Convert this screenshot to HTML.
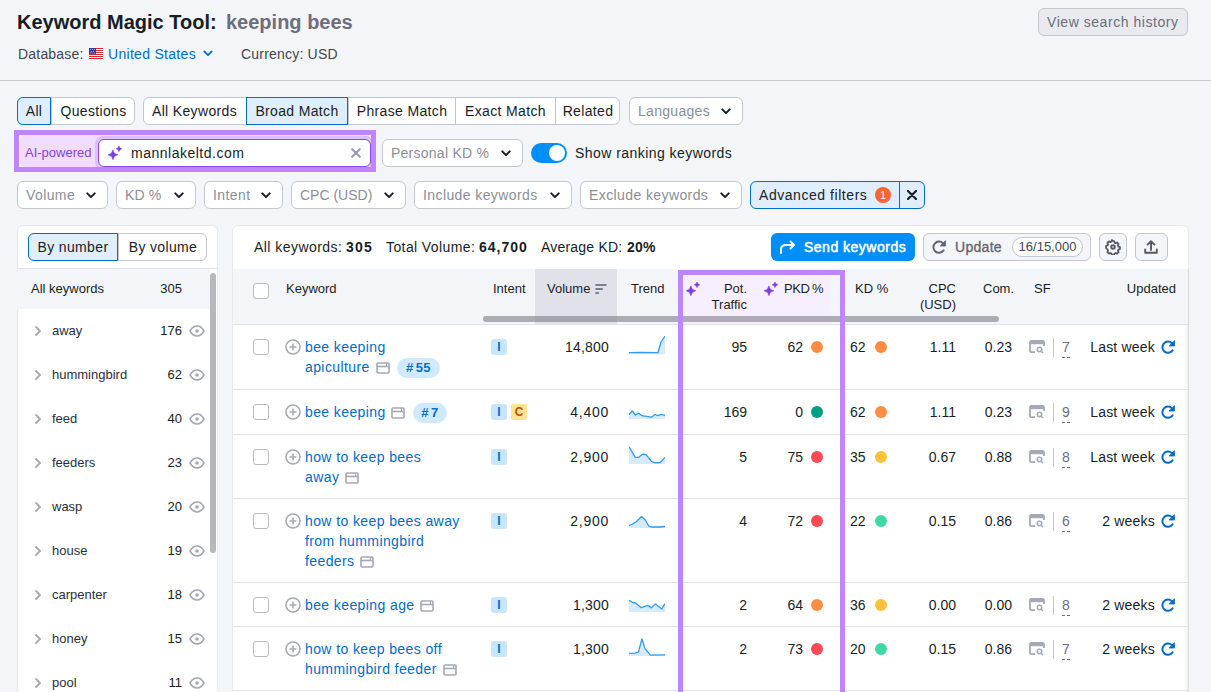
<!DOCTYPE html><html><head><meta charset="utf-8"><style>
*{box-sizing:border-box;margin:0;padding:0}
html,body{width:1211px;height:692px;overflow:hidden;background:#f4f5f9;font-family:"Liberation Sans",sans-serif;color:#181e25;font-size:14px}
.a{position:absolute;white-space:nowrap}
.tx{position:absolute;white-space:nowrap;line-height:16px}
.box{position:absolute;height:28px;border:1px solid #c4c7cf;background:#fff;border-radius:6px}
.g{color:#8b8e99}
.seg{position:absolute;top:0;height:26px;line-height:26px;text-align:center;white-space:nowrap;letter-spacing:0.35px}
.segd{border-left:1px solid #c4c7cf}
.card{position:absolute;background:#fff;border-radius:6px;border:1px solid #e8e9ef}
.cb{position:absolute;width:16px;height:16px;border:1px solid #b9bcc6;border-radius:3px;background:#fff}
.kw{position:absolute;left:305px;line-height:20px;color:#006dca;white-space:nowrap}
.num{position:absolute;line-height:20px;white-space:nowrap;text-align:right}
.dot{position:absolute;width:12px;height:12px;border-radius:50%}
.ib{position:absolute;width:16px;height:16px;border-radius:3px;font-size:12px;font-weight:bold;text-align:center;line-height:16px}
.hd{position:absolute;line-height:16px;font-size:13px;white-space:nowrap}
</style></head><body>
<div class="a" style="left:17px;top:10px;font-size:20px;font-weight:bold;line-height:24px">Keyword Magic Tool:</div>
<div class="a" style="left:226px;top:10px;font-size:20px;font-weight:bold;line-height:24px;color:#6c6e79">keeping bees</div>
<div class="tx" style="left:18px;top:46px;color:#42464e;letter-spacing:0.2px">Database:</div>
<svg class="a" style="left:89px;top:48px" width="14" height="11" viewBox="0 0 14 11"><rect width="14" height="11" fill="#fff"/><g fill="#d52b33"><rect y="0" width="14" height="1"/><rect y="2" width="14" height="1"/><rect y="4" width="14" height="1"/><rect y="6" width="14" height="1"/><rect y="8" width="14" height="1"/><rect y="10" width="14" height="1"/></g><rect width="7" height="6" fill="#3a3d8f"/><g fill="#9aa0d8"><rect x="1" y="1" width="1" height="1"/><rect x="3" y="1" width="1" height="1"/><rect x="5" y="1" width="1" height="1"/><rect x="2" y="3" width="1" height="1"/><rect x="4" y="3" width="1" height="1"/><rect x="1" y="4.5" width="1" height="1"/><rect x="3" y="4.5" width="1" height="1"/><rect x="5" y="4.5" width="1" height="1"/></g></svg>
<div class="tx" style="left:108px;top:46px;color:#006dca;letter-spacing:0.3px">United States</div>
<svg class="a" style="left:203px;top:50px" width="10" height="8" viewBox="0 0 10 8"><path d="M1.3 1.4L5 5.1L8.7 1.4" fill="none" stroke="#006dca" stroke-width="1.8" stroke-linecap="round" stroke-linejoin="round"/></svg>
<div class="tx" style="left:241px;top:46px;color:#42464e;letter-spacing:0.2px">Currency: USD</div>
<div class="box" style="left:1038px;top:8px;width:150px;background:#e9eaef;border-color:#c4c7cf"></div>
<div class="tx" style="left:1047px;top:14px;color:#6c6e79;letter-spacing:0.55px">View search history</div>
<div class="a" style="left:0;top:80px;width:1211px;height:1px;background:#c8cad3"></div>
<div class="box" style="left:17px;top:97px;width:118px;height:28px;overflow:hidden">
<div class="seg" style="left:-1px;width:34px;height:26px;line-height:26px">All</div>
<div class="seg segd" style="left:33px;width:84px;height:26px;line-height:26px">Questions</div>
</div>
<div class="a" style="left:17px;top:97px;width:34px;height:28px;border:1px solid #006dca;background:#e0eefb;border-radius:6px 0 0 6px;text-align:center;line-height:26px;letter-spacing:0.35px">All</div>
<div class="box" style="left:143px;top:97px;width:477px;height:28px;overflow:hidden">
<div class="seg" style="left:-1px;width:103px;height:26px;line-height:26px">All Keywords</div>
<div class="seg segd" style="left:102px;width:102px;height:26px;line-height:26px">Broad Match</div>
<div class="seg segd" style="left:204px;width:107px;height:26px;line-height:26px">Phrase Match</div>
<div class="seg segd" style="left:311px;width:100px;height:26px;line-height:26px">Exact Match</div>
<div class="seg segd" style="left:411px;width:65px;height:26px;line-height:26px">Related</div>
</div>
<div class="a" style="left:246px;top:97px;width:102px;height:28px;border:1px solid #006dca;background:#e0eefb;border-radius:0;text-align:center;line-height:26px;letter-spacing:0.35px">Broad Match</div>
<div class="box" style="left:629px;top:97px;width:114px"></div>
<div class="tx g" style="left:638px;top:103px;letter-spacing:0.3px">Languages</div>
<svg class="a" style="left:721px;top:108px" width="10" height="8" viewBox="0 0 10 8"><path d="M1.3 1.4L5 5.1L8.7 1.4" fill="none" stroke="#181e25" stroke-width="2" stroke-linecap="round" stroke-linejoin="round"/></svg>
<div class="a" style="left:20px;top:135px;width:351px;height:32px;background:#f0dcfd;border-radius:6px"></div>
<div class="tx" style="left:25px;top:145px;font-size:13px;color:#8b3fe0">AI-powered</div>
<div class="a" style="left:95px;top:136px;width:279px;height:34px;border-radius:8px;background:#dcc0fb"></div>
<div class="a" style="left:98px;top:139px;width:273px;height:28px;border-radius:6px;background:#fff;border:1px solid #8f45e8"></div>
<svg class="a" style="left:108px;top:146px" width="14" height="14" viewBox="0 0 14 14"><path d="M4.9 3.8000000000000007L6.4 7.300000000000001L9.9 8.8L6.4 10.3L4.9 13.8L3.4000000000000004 10.3L-0.09999999999999964 8.8L3.4000000000000004 7.300000000000001Z" fill="#7e3fe0" stroke="#7e3fe0" stroke-width="0.5" stroke-linejoin="round"/><path d="M11 -0.10000000000000009L11.928 1.8719999999999999L13.9 2.8L11.928 3.7279999999999998L11 5.699999999999999L10.072 3.7279999999999998L8.1 2.8L10.072 1.8719999999999999Z" fill="#7e3fe0" stroke="#7e3fe0" stroke-width="0.5" stroke-linejoin="round"/></svg>
<div class="tx" style="left:131px;top:145px;letter-spacing:0.5px">mannlakeltd.com</div>
<svg class="a" style="left:351px;top:148px" width="10" height="10" viewBox="0 0 10 10"><path d="M1.2 1.2l7.6 7.6M8.8 1.2l-7.6 7.6" stroke="#9b9ea8" stroke-width="2.1" stroke-linecap="round"/></svg>
<div class="a" style="left:14px;top:130px;width:362px;height:42px;border:5px solid #c084fc"></div>
<div class="box" style="left:382px;top:139px;width:141px"></div>
<div class="tx g" style="left:391px;top:145px;letter-spacing:0.25px">Personal KD %</div>
<svg class="a" style="left:501px;top:150px" width="10" height="8" viewBox="0 0 10 8"><path d="M1.3 1.4L5 5.1L8.7 1.4" fill="none" stroke="#181e25" stroke-width="2" stroke-linecap="round" stroke-linejoin="round"/></svg>
<div class="a" style="left:531px;top:143px;width:36px;height:20px;border-radius:10px;background:#008ff8"></div>
<div class="a" style="left:549px;top:145px;width:16px;height:16px;border-radius:50%;background:#fff"></div>
<div class="tx" style="left:575px;top:145px;letter-spacing:0.45px">Show ranking keywords</div>
<div class="box" style="left:17px;top:181px;width:91px"></div>
<div class="tx g" style="left:26px;top:187px;letter-spacing:0.4px">Volume</div>
<svg class="a" style="left:86px;top:192px" width="10" height="8" viewBox="0 0 10 8"><path d="M1.3 1.4L5 5.1L8.7 1.4" fill="none" stroke="#181e25" stroke-width="2" stroke-linecap="round" stroke-linejoin="round"/></svg>
<div class="box" style="left:116px;top:181px;width:80px"></div>
<div class="tx g" style="left:125px;top:187px;letter-spacing:0.1px">KD %</div>
<svg class="a" style="left:174px;top:192px" width="10" height="8" viewBox="0 0 10 8"><path d="M1.3 1.4L5 5.1L8.7 1.4" fill="none" stroke="#181e25" stroke-width="2" stroke-linecap="round" stroke-linejoin="round"/></svg>
<div class="box" style="left:204px;top:181px;width:79px"></div>
<div class="tx g" style="left:213px;top:187px;letter-spacing:0.4px">Intent</div>
<svg class="a" style="left:261px;top:192px" width="10" height="8" viewBox="0 0 10 8"><path d="M1.3 1.4L5 5.1L8.7 1.4" fill="none" stroke="#181e25" stroke-width="2" stroke-linecap="round" stroke-linejoin="round"/></svg>
<div class="box" style="left:291px;top:181px;width:115px"></div>
<div class="tx g" style="left:300px;top:187px;letter-spacing:0px">CPC (USD)</div>
<svg class="a" style="left:384px;top:192px" width="10" height="8" viewBox="0 0 10 8"><path d="M1.3 1.4L5 5.1L8.7 1.4" fill="none" stroke="#181e25" stroke-width="2" stroke-linecap="round" stroke-linejoin="round"/></svg>
<div class="box" style="left:414px;top:181px;width:158px"></div>
<div class="tx g" style="left:423px;top:187px;letter-spacing:0.4px">Include keywords</div>
<svg class="a" style="left:550px;top:192px" width="10" height="8" viewBox="0 0 10 8"><path d="M1.3 1.4L5 5.1L8.7 1.4" fill="none" stroke="#181e25" stroke-width="2" stroke-linecap="round" stroke-linejoin="round"/></svg>
<div class="box" style="left:580px;top:181px;width:162px"></div>
<div class="tx g" style="left:589px;top:187px;letter-spacing:0.4px">Exclude keywords</div>
<svg class="a" style="left:720px;top:192px" width="10" height="8" viewBox="0 0 10 8"><path d="M1.3 1.4L5 5.1L8.7 1.4" fill="none" stroke="#181e25" stroke-width="2" stroke-linecap="round" stroke-linejoin="round"/></svg>
<div class="a" style="left:750px;top:181px;width:175px;height:28px;border:1px solid #006dca;background:#e0eefb;border-radius:6px"></div>
<div class="a" style="left:899px;top:181px;width:1px;height:28px;background:#006dca"></div>
<div class="tx" style="left:759px;top:187px;letter-spacing:0.55px">Advanced filters</div>
<div class="a" style="left:875px;top:187px;width:16px;height:16px;border-radius:50%;background:#ff642d;color:#fff;font-size:11px;line-height:16px;text-align:center">1</div>
<svg class="a" style="left:907px;top:190px" width="10" height="10" viewBox="0 0 10 10"><path d="M1 1l8 8M9 1l-8 8" stroke="#181e25" stroke-width="2.2" stroke-linecap="round"/></svg>
<div class="card" style="left:17px;top:225px;width:201px;height:480px;overflow:hidden">
</div>
<div class="box" style="left:28px;top:233px;width:179px;height:28px;overflow:hidden">
<div class="seg" style="left:-1px;width:90px;height:26px;line-height:26px">By number</div>
<div class="seg segd" style="left:89px;width:89px;height:26px;line-height:26px">By volume</div>
</div>
<div class="a" style="left:28px;top:233px;width:90px;height:28px;border:1px solid #006dca;background:#e0eefb;border-radius:6px 0 0 6px;text-align:center;line-height:26px;letter-spacing:0.35px">By number</div>
<div class="a" style="left:17px;top:268px;width:200px;height:1px;background:#e0e1e9"></div>
<div class="a" style="left:17px;top:269px;width:193px;height:40px;background:#f4f5f9"></div>
<div class="tx" style="left:31px;top:281px;font-size:13px">All keywords</div>
<div class="tx" style="left:140px;width:42px;text-align:right;top:281px;font-size:13px">305</div>
<svg class="a" style="left:34px;top:326px" width="8" height="10" viewBox="0 0 8 10"><path d="M2 1l4 4-4 4" fill="none" stroke="#a6a9b3" stroke-width="1.8" stroke-linecap="round" stroke-linejoin="round"/></svg>
<div class="tx" style="left:52px;top:323px;font-size:13px;color:#2b2f36">away</div>
<div class="tx" style="left:140px;width:42px;text-align:right;top:323px;font-size:13px">176</div>
<svg class="a" style="left:189px;top:325px" width="16" height="12" viewBox="0 0 16 12"><path d="M1 6C3 2.4 5.4 1 8 1s5 1.4 7 5c-2 3.6-4.4 5-7 5S3 9.6 1 6Z" fill="none" stroke="#a6a9b3" stroke-width="1.6"/><circle cx="8" cy="6" r="1.8" fill="#a6a9b3"/></svg>
<svg class="a" style="left:34px;top:370px" width="8" height="10" viewBox="0 0 8 10"><path d="M2 1l4 4-4 4" fill="none" stroke="#a6a9b3" stroke-width="1.8" stroke-linecap="round" stroke-linejoin="round"/></svg>
<div class="tx" style="left:52px;top:367px;font-size:13px;color:#2b2f36">hummingbird</div>
<div class="tx" style="left:140px;width:42px;text-align:right;top:367px;font-size:13px">62</div>
<svg class="a" style="left:189px;top:369px" width="16" height="12" viewBox="0 0 16 12"><path d="M1 6C3 2.4 5.4 1 8 1s5 1.4 7 5c-2 3.6-4.4 5-7 5S3 9.6 1 6Z" fill="none" stroke="#a6a9b3" stroke-width="1.6"/><circle cx="8" cy="6" r="1.8" fill="#a6a9b3"/></svg>
<svg class="a" style="left:34px;top:414px" width="8" height="10" viewBox="0 0 8 10"><path d="M2 1l4 4-4 4" fill="none" stroke="#a6a9b3" stroke-width="1.8" stroke-linecap="round" stroke-linejoin="round"/></svg>
<div class="tx" style="left:52px;top:411px;font-size:13px;color:#2b2f36">feed</div>
<div class="tx" style="left:140px;width:42px;text-align:right;top:411px;font-size:13px">40</div>
<svg class="a" style="left:189px;top:413px" width="16" height="12" viewBox="0 0 16 12"><path d="M1 6C3 2.4 5.4 1 8 1s5 1.4 7 5c-2 3.6-4.4 5-7 5S3 9.6 1 6Z" fill="none" stroke="#a6a9b3" stroke-width="1.6"/><circle cx="8" cy="6" r="1.8" fill="#a6a9b3"/></svg>
<svg class="a" style="left:34px;top:458px" width="8" height="10" viewBox="0 0 8 10"><path d="M2 1l4 4-4 4" fill="none" stroke="#a6a9b3" stroke-width="1.8" stroke-linecap="round" stroke-linejoin="round"/></svg>
<div class="tx" style="left:52px;top:455px;font-size:13px;color:#2b2f36">feeders</div>
<div class="tx" style="left:140px;width:42px;text-align:right;top:455px;font-size:13px">23</div>
<svg class="a" style="left:189px;top:457px" width="16" height="12" viewBox="0 0 16 12"><path d="M1 6C3 2.4 5.4 1 8 1s5 1.4 7 5c-2 3.6-4.4 5-7 5S3 9.6 1 6Z" fill="none" stroke="#a6a9b3" stroke-width="1.6"/><circle cx="8" cy="6" r="1.8" fill="#a6a9b3"/></svg>
<svg class="a" style="left:34px;top:502px" width="8" height="10" viewBox="0 0 8 10"><path d="M2 1l4 4-4 4" fill="none" stroke="#a6a9b3" stroke-width="1.8" stroke-linecap="round" stroke-linejoin="round"/></svg>
<div class="tx" style="left:52px;top:499px;font-size:13px;color:#2b2f36">wasp</div>
<div class="tx" style="left:140px;width:42px;text-align:right;top:499px;font-size:13px">20</div>
<svg class="a" style="left:189px;top:501px" width="16" height="12" viewBox="0 0 16 12"><path d="M1 6C3 2.4 5.4 1 8 1s5 1.4 7 5c-2 3.6-4.4 5-7 5S3 9.6 1 6Z" fill="none" stroke="#a6a9b3" stroke-width="1.6"/><circle cx="8" cy="6" r="1.8" fill="#a6a9b3"/></svg>
<svg class="a" style="left:34px;top:546px" width="8" height="10" viewBox="0 0 8 10"><path d="M2 1l4 4-4 4" fill="none" stroke="#a6a9b3" stroke-width="1.8" stroke-linecap="round" stroke-linejoin="round"/></svg>
<div class="tx" style="left:52px;top:543px;font-size:13px;color:#2b2f36">house</div>
<div class="tx" style="left:140px;width:42px;text-align:right;top:543px;font-size:13px">19</div>
<svg class="a" style="left:189px;top:545px" width="16" height="12" viewBox="0 0 16 12"><path d="M1 6C3 2.4 5.4 1 8 1s5 1.4 7 5c-2 3.6-4.4 5-7 5S3 9.6 1 6Z" fill="none" stroke="#a6a9b3" stroke-width="1.6"/><circle cx="8" cy="6" r="1.8" fill="#a6a9b3"/></svg>
<svg class="a" style="left:34px;top:590px" width="8" height="10" viewBox="0 0 8 10"><path d="M2 1l4 4-4 4" fill="none" stroke="#a6a9b3" stroke-width="1.8" stroke-linecap="round" stroke-linejoin="round"/></svg>
<div class="tx" style="left:52px;top:587px;font-size:13px;color:#2b2f36">carpenter</div>
<div class="tx" style="left:140px;width:42px;text-align:right;top:587px;font-size:13px">18</div>
<svg class="a" style="left:189px;top:589px" width="16" height="12" viewBox="0 0 16 12"><path d="M1 6C3 2.4 5.4 1 8 1s5 1.4 7 5c-2 3.6-4.4 5-7 5S3 9.6 1 6Z" fill="none" stroke="#a6a9b3" stroke-width="1.6"/><circle cx="8" cy="6" r="1.8" fill="#a6a9b3"/></svg>
<svg class="a" style="left:34px;top:634px" width="8" height="10" viewBox="0 0 8 10"><path d="M2 1l4 4-4 4" fill="none" stroke="#a6a9b3" stroke-width="1.8" stroke-linecap="round" stroke-linejoin="round"/></svg>
<div class="tx" style="left:52px;top:631px;font-size:13px;color:#2b2f36">honey</div>
<div class="tx" style="left:140px;width:42px;text-align:right;top:631px;font-size:13px">15</div>
<svg class="a" style="left:189px;top:633px" width="16" height="12" viewBox="0 0 16 12"><path d="M1 6C3 2.4 5.4 1 8 1s5 1.4 7 5c-2 3.6-4.4 5-7 5S3 9.6 1 6Z" fill="none" stroke="#a6a9b3" stroke-width="1.6"/><circle cx="8" cy="6" r="1.8" fill="#a6a9b3"/></svg>
<svg class="a" style="left:34px;top:678px" width="8" height="10" viewBox="0 0 8 10"><path d="M2 1l4 4-4 4" fill="none" stroke="#a6a9b3" stroke-width="1.8" stroke-linecap="round" stroke-linejoin="round"/></svg>
<div class="tx" style="left:52px;top:675px;font-size:13px;color:#2b2f36">pool</div>
<div class="tx" style="left:140px;width:42px;text-align:right;top:675px;font-size:13px">11</div>
<svg class="a" style="left:189px;top:677px" width="16" height="12" viewBox="0 0 16 12"><path d="M1 6C3 2.4 5.4 1 8 1s5 1.4 7 5c-2 3.6-4.4 5-7 5S3 9.6 1 6Z" fill="none" stroke="#a6a9b3" stroke-width="1.6"/><circle cx="8" cy="6" r="1.8" fill="#a6a9b3"/></svg>
<div class="a" style="left:210px;top:273px;width:6px;height:280px;border-radius:3px;background:#b6b8be"></div>
<div class="card" style="left:232px;top:225px;width:957px;height:480px"></div>
<div class="a" style="left:1184px;top:269px;width:5px;height:430px;background:linear-gradient(90deg,rgba(0,0,0,0),rgba(0,0,0,0.07))"></div>
<div class="tx" style="left:254px;top:239px;letter-spacing:0.45px">All keywords:</div>
<div class="tx" style="left:346px;top:239px;font-weight:bold;letter-spacing:1.2px">305</div>
<div class="tx" style="left:386px;top:239px;letter-spacing:0.4px">Total Volume:</div>
<div class="tx" style="left:479px;top:239px;font-weight:bold;letter-spacing:1px">64,700</div>
<div class="tx" style="left:541px;top:239px;letter-spacing:0.2px">Average KD:</div>
<div class="tx" style="left:627px;top:239px;font-weight:bold;letter-spacing:0.2px">20%</div>
<div class="a" style="left:771px;top:233px;width:144px;height:28px;border-radius:6px;background:#008ff8"></div>
<svg class="a" style="left:779px;top:240px" width="17" height="14" viewBox="0 0 17 14"><path d="M2 13V9.5C2 6.5 4 5 7 5h8M11.5 1.5L15 5l-3.5 3.5" fill="none" stroke="#fff" stroke-width="2" stroke-linecap="round" stroke-linejoin="round"/></svg>
<div class="tx" style="left:804px;top:239px;color:#fff;letter-spacing:0.5px;-webkit-text-stroke:0.5px #fff">Send keywords</div>
<div class="box" style="left:923px;top:233px;width:168px;background:#f4f5f9"></div>
<svg class="a" style="left:932px;top:240px" width="14" height="14" viewBox="0 0 14 14"><path d="M10.9 3.2A5.6 5.6 0 1 0 11.6 10.4" fill="none" stroke="#5f636e" stroke-width="2" stroke-linecap="round"/><path d="M13.6 0.6V6H8.2Z" fill="#5f636e" stroke="#5f636e" stroke-width="0.8" stroke-linejoin="round"/></svg>
<div class="tx" style="left:955px;top:239px;color:#5f636e;letter-spacing:0.3px;-webkit-text-stroke:0.3px #5f636e">Update</div>
<div class="a" style="left:1012px;top:237px;width:71px;height:20px;border:1px solid #c4c7cf;border-radius:10px;background:#fff;font-size:13px;line-height:18px;text-align:center;color:#42464e">16/15,000</div>
<div class="box" style="left:1099px;top:233px;width:28px;background:#f4f5f9"></div>
<svg class="a" style="left:1105px;top:239px" width="16" height="16" viewBox="0 0 18 18"><path d="M9 2.2l1.3.2.4 1.7 1.2.6 1.6-.8 1.8 1.8-.8 1.6.6 1.2 1.7.4v2.6l-1.7.4-.6 1.2.8 1.6-1.8 1.8-1.6-.8-1.2.6-.4 1.7H7.7l-.4-1.7-1.2-.6-1.6.8-1.8-1.8.8-1.6-.6-1.2L1.2 10.3V7.7l1.7-.4.6-1.2-.8-1.6 1.8-1.8 1.6.8 1.2-.6.4-1.7z" fill="none" stroke="#555963" stroke-width="2" stroke-linejoin="round"/><circle cx="9" cy="9" r="2.2" fill="#a8abb4" stroke="#555963" stroke-width="1.8"/></svg>
<div class="box" style="left:1135px;top:233px;width:33px;background:#f4f5f9"></div>
<svg class="a" style="left:1144px;top:240px" width="14" height="14" viewBox="0 0 14 14"><path d="M7 10V1.5M3.6 4.6L7 1.3l3.4 3.3M1.2 9.5v3.2h11.6V9.5" fill="none" stroke="#555963" stroke-width="1.9" stroke-linecap="round" stroke-linejoin="round"/></svg>
<div class="a" style="left:233px;top:269px;width:955px;height:55px;background:#f4f5f9"></div>
<div class="a" style="left:535px;top:269px;width:82px;height:55px;background:#e1e2e9"></div>
<div class="a" style="left:682px;top:269px;width:149px;height:55px;background:#f8effe"></div>
<div class="a" style="left:233px;top:324px;width:955px;height:1px;background:#e0e1e9"></div>
<div class="cb" style="left:253px;top:283px"></div>
<div class="hd" style="left:286px;top:281px">Keyword</div>
<div class="hd" style="left:493px;top:281px">Intent</div>
<div class="hd" style="left:547px;top:281px">Volume</div>
<svg class="a" style="left:595px;top:283px" width="12" height="12" viewBox="0 0 12 12"><path d="M1 2h10M1 6h6.2M1 10h2.4" stroke="#4d6669" stroke-width="1.6" stroke-linecap="round"/></svg>
<div class="hd" style="left:631px;top:281px">Trend</div>
<svg class="a" style="left:686px;top:282px" width="14" height="14" viewBox="0 0 14 14"><path d="M4.9 3.8000000000000007L6.4 7.300000000000001L9.9 8.8L6.4 10.3L4.9 13.8L3.4000000000000004 10.3L-0.09999999999999964 8.8L3.4000000000000004 7.300000000000001Z" fill="#7e3fe0" stroke="#7e3fe0" stroke-width="0.5" stroke-linejoin="round"/><path d="M11 -0.10000000000000009L11.928 1.8719999999999999L13.9 2.8L11.928 3.7279999999999998L11 5.699999999999999L10.072 3.7279999999999998L8.1 2.8L10.072 1.8719999999999999Z" fill="#7e3fe0" stroke="#7e3fe0" stroke-width="0.5" stroke-linejoin="round"/></svg>
<div class="hd" style="left:700px;width:47px;text-align:right;top:281px">Pot.<br>Traffic</div>
<svg class="a" style="left:764px;top:282px" width="14" height="14" viewBox="0 0 14 14"><path d="M4.9 3.8000000000000007L6.4 7.300000000000001L9.9 8.8L6.4 10.3L4.9 13.8L3.4000000000000004 10.3L-0.09999999999999964 8.8L3.4000000000000004 7.300000000000001Z" fill="#7e3fe0" stroke="#7e3fe0" stroke-width="0.5" stroke-linejoin="round"/><path d="M11 -0.10000000000000009L11.928 1.8719999999999999L13.9 2.8L11.928 3.7279999999999998L11 5.699999999999999L10.072 3.7279999999999998L8.1 2.8L10.072 1.8719999999999999Z" fill="#7e3fe0" stroke="#7e3fe0" stroke-width="0.5" stroke-linejoin="round"/></svg>
<div class="hd" style="left:784px;top:281px;letter-spacing:-0.4px">PKD</div><div class="hd" style="left:812px;top:281px;letter-spacing:-0.4px">%</div>
<div class="hd" style="left:855px;top:281px">KD %</div>
<div class="hd" style="left:900px;width:56px;text-align:right;top:281px">CPC<br>(USD)</div>
<div class="hd" style="left:983px;top:281px">Com.</div>
<div class="hd" style="left:1034px;top:281px">SF</div>
<div class="hd" style="left:1100px;width:76px;text-align:right;top:281px">Updated</div>
<div class="a" style="left:483px;top:316px;width:516px;height:6px;border-radius:3px;background:rgba(105,108,117,0.52)"></div>
<div class="a" style="left:233px;top:389px;width:955px;height:1px;background:#e0e1e9"></div>
<div class="cb" style="left:253px;top:339px"></div>
<svg class="a" style="left:285px;top:339px" width="16" height="16" viewBox="0 0 16 16"><circle cx="8" cy="8" r="7" fill="none" stroke="#a6a9b3" stroke-width="1.6"/><path d="M8 4.5v7M4.5 8h7" stroke="#a6a9b3" stroke-width="1.6"/></svg>
<div class="kw" style="top:337px;letter-spacing:0.4px">bee keeping<br>apiculture</div>
<svg class="a" style="left:376px;top:362px" width="14" height="12" viewBox="0 0 14 12"><rect x="1" y="1" width="12" height="10" rx="1" fill="none" stroke="#a6a9b3" stroke-width="1.6"/><path d="M1 4.5h12" stroke="#a6a9b3" stroke-width="1.6"/><path d="M10.5 1v3.5" stroke="#a6a9b3" stroke-width="1.2"/></svg>
<div class="a" style="left:397px;top:358px;width:43px;height:20px;border-radius:10px;background:#cfeafd;color:#0a6ccb;font-size:13px;font-weight:bold;line-height:20px;text-align:center;letter-spacing:0.4px"><span style="margin-right:2px">#</span>55</div>
<div class="ib" style="left:491px;top:339px;background:#c7e6fc;color:#0a6ac9">I</div>
<div class="num" style="left:548px;width:61px;top:337px;letter-spacing:0.2px">14,800</div>
<svg class="a" style="left:629px;top:336px" width="36" height="18" viewBox="0 0 36 18"><path d="M0.0 16.7 L12.0 16.4 L29.0 16.7 L32.0 6.0 L36.0 0.2 L36 18 L0 18Z" fill="#d6ebfc"/><path d="M0.0 16.7 L12.0 16.4 L29.0 16.7 L32.0 6.0 L36.0 0.2" fill="none" stroke="#2f9bf2" stroke-width="1.3" stroke-linejoin="round"/></svg>
<div class="num" style="left:700px;width:47px;top:337px">95</div>
<div class="num" style="left:760px;width:43px;top:337px">62</div>
<div class="dot" style="left:811px;top:341px;background:#ff8c43"></div>
<div class="num" style="left:850px;top:337px;text-align:left">62</div>
<div class="dot" style="left:875px;top:341px;background:#ff8c43"></div>
<div class="num" style="left:900px;width:56px;top:337px">1.11</div>
<div class="num" style="left:960px;width:52px;top:337px">0.23</div>
<svg class="a" style="left:1029px;top:340px" width="16" height="14" viewBox="0 0 16 14"><path d="M6 12.2H2.2A1.2 1.2 0 0 1 1 11V2.2A1.2 1.2 0 0 1 2.2 1h11.6A1.2 1.2 0 0 1 15 2.2V6" fill="none" stroke="#a6a9b3" stroke-width="1.8"/><path d="M1 3h14" stroke="#a6a9b3" stroke-width="2.4"/><circle cx="10.5" cy="9.5" r="2.2" fill="none" stroke="#a6a9b3" stroke-width="1.6"/><path d="M12.2 11.2L14 13" stroke="#a6a9b3" stroke-width="1.6"/></svg>
<div class="a" style="left:1053px;top:338px;width:1px;height:19px;background:#c4c7cf"></div>
<div class="num" style="left:1062px;top:337px;color:#6c6e79">7</div>
<div class="a" style="left:1062px;top:357px;width:8px;height:0;border-top:1px dashed #6c6e79"></div>
<div class="num" style="left:1070px;width:85px;top:337px;letter-spacing:0.2px">Last week</div>
<svg class="a" style="left:1161px;top:340px" width="14" height="14" viewBox="0 0 14 14"><path d="M10.9 3.2A5.6 5.6 0 1 0 11.6 10.4" fill="none" stroke="#006dca" stroke-width="2" stroke-linecap="round"/><path d="M13.6 0.6V6H8.2Z" fill="#006dca" stroke="#006dca" stroke-width="0.8" stroke-linejoin="round"/></svg>
<div class="a" style="left:233px;top:434px;width:955px;height:1px;background:#e0e1e9"></div>
<div class="cb" style="left:253px;top:404px"></div>
<svg class="a" style="left:285px;top:404px" width="16" height="16" viewBox="0 0 16 16"><circle cx="8" cy="8" r="7" fill="none" stroke="#a6a9b3" stroke-width="1.6"/><path d="M8 4.5v7M4.5 8h7" stroke="#a6a9b3" stroke-width="1.6"/></svg>
<div class="kw" style="top:402px;letter-spacing:0.4px">bee keeping</div>
<svg class="a" style="left:391px;top:407px" width="14" height="12" viewBox="0 0 14 12"><rect x="1" y="1" width="12" height="10" rx="1" fill="none" stroke="#a6a9b3" stroke-width="1.6"/><path d="M1 4.5h12" stroke="#a6a9b3" stroke-width="1.6"/><path d="M10.5 1v3.5" stroke="#a6a9b3" stroke-width="1.2"/></svg>
<div class="a" style="left:413px;top:403px;width:34px;height:20px;border-radius:10px;background:#cfeafd;color:#0a6ccb;font-size:13px;font-weight:bold;line-height:20px;text-align:center;letter-spacing:0.4px"><span style="margin-right:2px">#</span>7</div>
<div class="ib" style="left:491px;top:404px;background:#c7e6fc;color:#0a6ac9">I</div>
<div class="ib" style="left:511px;top:404px;background:#fde38f;color:#b5520f">C</div>
<div class="num" style="left:548px;width:61px;top:402px;letter-spacing:0.75px">4,400</div>
<svg class="a" style="left:629px;top:401px" width="36" height="18" viewBox="0 0 36 18"><path d="M0.0 13.5 L3.3 10.0 L6.5 14.0 L9.5 12.4 L13.0 14.6 L16.0 15.1 L22.5 16.2 L25.7 13.5 L28.9 14.6 L32.2 13.3 L36.0 14.4 L36 18 L0 18Z" fill="#d6ebfc"/><path d="M0.0 13.5 L3.3 10.0 L6.5 14.0 L9.5 12.4 L13.0 14.6 L16.0 15.1 L22.5 16.2 L25.7 13.5 L28.9 14.6 L32.2 13.3 L36.0 14.4" fill="none" stroke="#2f9bf2" stroke-width="1.3" stroke-linejoin="round"/></svg>
<div class="num" style="left:700px;width:47px;top:402px">169</div>
<div class="num" style="left:760px;width:43px;top:402px">0</div>
<div class="dot" style="left:811px;top:406px;background:#009f81"></div>
<div class="num" style="left:850px;top:402px;text-align:left">62</div>
<div class="dot" style="left:875px;top:406px;background:#ff8c43"></div>
<div class="num" style="left:900px;width:56px;top:402px">1.11</div>
<div class="num" style="left:960px;width:52px;top:402px">0.23</div>
<svg class="a" style="left:1029px;top:405px" width="16" height="14" viewBox="0 0 16 14"><path d="M6 12.2H2.2A1.2 1.2 0 0 1 1 11V2.2A1.2 1.2 0 0 1 2.2 1h11.6A1.2 1.2 0 0 1 15 2.2V6" fill="none" stroke="#a6a9b3" stroke-width="1.8"/><path d="M1 3h14" stroke="#a6a9b3" stroke-width="2.4"/><circle cx="10.5" cy="9.5" r="2.2" fill="none" stroke="#a6a9b3" stroke-width="1.6"/><path d="M12.2 11.2L14 13" stroke="#a6a9b3" stroke-width="1.6"/></svg>
<div class="a" style="left:1053px;top:403px;width:1px;height:19px;background:#c4c7cf"></div>
<div class="num" style="left:1062px;top:402px;color:#6c6e79">9</div>
<div class="a" style="left:1062px;top:422px;width:8px;height:0;border-top:1px dashed #6c6e79"></div>
<div class="num" style="left:1070px;width:85px;top:402px;letter-spacing:0.2px">Last week</div>
<svg class="a" style="left:1161px;top:405px" width="14" height="14" viewBox="0 0 14 14"><path d="M10.9 3.2A5.6 5.6 0 1 0 11.6 10.4" fill="none" stroke="#006dca" stroke-width="2" stroke-linecap="round"/><path d="M13.6 0.6V6H8.2Z" fill="#006dca" stroke="#006dca" stroke-width="0.8" stroke-linejoin="round"/></svg>
<div class="a" style="left:233px;top:498px;width:955px;height:1px;background:#e0e1e9"></div>
<div class="cb" style="left:253px;top:449px"></div>
<svg class="a" style="left:285px;top:449px" width="16" height="16" viewBox="0 0 16 16"><circle cx="8" cy="8" r="7" fill="none" stroke="#a6a9b3" stroke-width="1.6"/><path d="M8 4.5v7M4.5 8h7" stroke="#a6a9b3" stroke-width="1.6"/></svg>
<div class="kw" style="top:447px;letter-spacing:0.4px">how to keep bees<br>away</div>
<svg class="a" style="left:345px;top:472px" width="14" height="12" viewBox="0 0 14 12"><rect x="1" y="1" width="12" height="10" rx="1" fill="none" stroke="#a6a9b3" stroke-width="1.6"/><path d="M1 4.5h12" stroke="#a6a9b3" stroke-width="1.6"/><path d="M10.5 1v3.5" stroke="#a6a9b3" stroke-width="1.2"/></svg>
<div class="ib" style="left:491px;top:449px;background:#c7e6fc;color:#0a6ac9">I</div>
<div class="num" style="left:548px;width:61px;top:447px;letter-spacing:0.75px">2,900</div>
<svg class="a" style="left:629px;top:446px" width="36" height="18" viewBox="0 0 36 18"><path d="M0.0 0.8 L6.2 11.4 L9.5 11.4 L13.8 8.1 L17.0 8.7 L22.5 15.4 L26.3 16.8 L31.1 16.5 L36.0 11.4 L36 18 L0 18Z" fill="#d6ebfc"/><path d="M0.0 0.8 L6.2 11.4 L9.5 11.4 L13.8 8.1 L17.0 8.7 L22.5 15.4 L26.3 16.8 L31.1 16.5 L36.0 11.4" fill="none" stroke="#2f9bf2" stroke-width="1.3" stroke-linejoin="round"/></svg>
<div class="num" style="left:700px;width:47px;top:447px">5</div>
<div class="num" style="left:760px;width:43px;top:447px">75</div>
<div class="dot" style="left:811px;top:451px;background:#ff4953"></div>
<div class="num" style="left:850px;top:447px;text-align:left">35</div>
<div class="dot" style="left:875px;top:451px;background:#ffc23a"></div>
<div class="num" style="left:900px;width:56px;top:447px">0.67</div>
<div class="num" style="left:960px;width:52px;top:447px">0.88</div>
<svg class="a" style="left:1029px;top:450px" width="16" height="14" viewBox="0 0 16 14"><path d="M6 12.2H2.2A1.2 1.2 0 0 1 1 11V2.2A1.2 1.2 0 0 1 2.2 1h11.6A1.2 1.2 0 0 1 15 2.2V6" fill="none" stroke="#a6a9b3" stroke-width="1.8"/><path d="M1 3h14" stroke="#a6a9b3" stroke-width="2.4"/><circle cx="10.5" cy="9.5" r="2.2" fill="none" stroke="#a6a9b3" stroke-width="1.6"/><path d="M12.2 11.2L14 13" stroke="#a6a9b3" stroke-width="1.6"/></svg>
<div class="a" style="left:1053px;top:448px;width:1px;height:19px;background:#c4c7cf"></div>
<div class="num" style="left:1062px;top:447px;color:#6c6e79">8</div>
<div class="a" style="left:1062px;top:467px;width:8px;height:0;border-top:1px dashed #6c6e79"></div>
<div class="num" style="left:1070px;width:85px;top:447px;letter-spacing:0.2px">Last week</div>
<svg class="a" style="left:1161px;top:450px" width="14" height="14" viewBox="0 0 14 14"><path d="M10.9 3.2A5.6 5.6 0 1 0 11.6 10.4" fill="none" stroke="#006dca" stroke-width="2" stroke-linecap="round"/><path d="M13.6 0.6V6H8.2Z" fill="#006dca" stroke="#006dca" stroke-width="0.8" stroke-linejoin="round"/></svg>
<div class="a" style="left:233px;top:582px;width:955px;height:1px;background:#e0e1e9"></div>
<div class="cb" style="left:253px;top:513px"></div>
<svg class="a" style="left:285px;top:513px" width="16" height="16" viewBox="0 0 16 16"><circle cx="8" cy="8" r="7" fill="none" stroke="#a6a9b3" stroke-width="1.6"/><path d="M8 4.5v7M4.5 8h7" stroke="#a6a9b3" stroke-width="1.6"/></svg>
<div class="kw" style="top:511px;letter-spacing:0.4px">how to keep bees away<br>from hummingbird<br>feeders</div>
<svg class="a" style="left:360px;top:556px" width="14" height="12" viewBox="0 0 14 12"><rect x="1" y="1" width="12" height="10" rx="1" fill="none" stroke="#a6a9b3" stroke-width="1.6"/><path d="M1 4.5h12" stroke="#a6a9b3" stroke-width="1.6"/><path d="M10.5 1v3.5" stroke="#a6a9b3" stroke-width="1.2"/></svg>
<div class="ib" style="left:491px;top:513px;background:#c7e6fc;color:#0a6ac9">I</div>
<div class="num" style="left:548px;width:61px;top:511px;letter-spacing:0.75px">2,900</div>
<svg class="a" style="left:629px;top:510px" width="36" height="18" viewBox="0 0 36 18"><path d="M0.0 15.4 L2.9 14.5 L7.2 11.7 L12.6 6.5 L16.5 10.2 L19.5 15.8 L22.1 17.0 L30.0 17.0 L36.0 16.5 L36 18 L0 18Z" fill="#d6ebfc"/><path d="M0.0 15.4 L2.9 14.5 L7.2 11.7 L12.6 6.5 L16.5 10.2 L19.5 15.8 L22.1 17.0 L30.0 17.0 L36.0 16.5" fill="none" stroke="#2f9bf2" stroke-width="1.3" stroke-linejoin="round"/></svg>
<div class="num" style="left:700px;width:47px;top:511px">4</div>
<div class="num" style="left:760px;width:43px;top:511px">72</div>
<div class="dot" style="left:811px;top:515px;background:#ff4953"></div>
<div class="num" style="left:850px;top:511px;text-align:left">22</div>
<div class="dot" style="left:875px;top:515px;background:#3ed9a3"></div>
<div class="num" style="left:900px;width:56px;top:511px">0.15</div>
<div class="num" style="left:960px;width:52px;top:511px">0.86</div>
<svg class="a" style="left:1029px;top:514px" width="16" height="14" viewBox="0 0 16 14"><path d="M6 12.2H2.2A1.2 1.2 0 0 1 1 11V2.2A1.2 1.2 0 0 1 2.2 1h11.6A1.2 1.2 0 0 1 15 2.2V6" fill="none" stroke="#a6a9b3" stroke-width="1.8"/><path d="M1 3h14" stroke="#a6a9b3" stroke-width="2.4"/><circle cx="10.5" cy="9.5" r="2.2" fill="none" stroke="#a6a9b3" stroke-width="1.6"/><path d="M12.2 11.2L14 13" stroke="#a6a9b3" stroke-width="1.6"/></svg>
<div class="a" style="left:1053px;top:512px;width:1px;height:19px;background:#c4c7cf"></div>
<div class="num" style="left:1062px;top:511px;color:#6c6e79">6</div>
<div class="a" style="left:1062px;top:531px;width:8px;height:0;border-top:1px dashed #6c6e79"></div>
<div class="num" style="left:1070px;width:85px;top:511px;letter-spacing:0.2px">2 weeks</div>
<svg class="a" style="left:1161px;top:514px" width="14" height="14" viewBox="0 0 14 14"><path d="M10.9 3.2A5.6 5.6 0 1 0 11.6 10.4" fill="none" stroke="#006dca" stroke-width="2" stroke-linecap="round"/><path d="M13.6 0.6V6H8.2Z" fill="#006dca" stroke="#006dca" stroke-width="0.8" stroke-linejoin="round"/></svg>
<div class="a" style="left:233px;top:626px;width:955px;height:1px;background:#e0e1e9"></div>
<div class="cb" style="left:253px;top:597px"></div>
<svg class="a" style="left:285px;top:597px" width="16" height="16" viewBox="0 0 16 16"><circle cx="8" cy="8" r="7" fill="none" stroke="#a6a9b3" stroke-width="1.6"/><path d="M8 4.5v7M4.5 8h7" stroke="#a6a9b3" stroke-width="1.6"/></svg>
<div class="kw" style="top:595px;letter-spacing:0.4px">bee keeping age</div>
<svg class="a" style="left:420px;top:600px" width="14" height="12" viewBox="0 0 14 12"><rect x="1" y="1" width="12" height="10" rx="1" fill="none" stroke="#a6a9b3" stroke-width="1.6"/><path d="M1 4.5h12" stroke="#a6a9b3" stroke-width="1.6"/><path d="M10.5 1v3.5" stroke="#a6a9b3" stroke-width="1.2"/></svg>
<div class="ib" style="left:491px;top:597px;background:#c7e6fc;color:#0a6ac9">I</div>
<div class="num" style="left:548px;width:61px;top:595px;letter-spacing:0.2px">1,300</div>
<svg class="a" style="left:629px;top:594px" width="36" height="18" viewBox="0 0 36 18"><path d="M0.0 6.3 L3.5 8.5 L6.2 8.8 L12.2 13.7 L18.7 11.4 L22.5 13.9 L26.3 9.9 L32.8 15.0 L36.0 9.6 L36 18 L0 18Z" fill="#d6ebfc"/><path d="M0.0 6.3 L3.5 8.5 L6.2 8.8 L12.2 13.7 L18.7 11.4 L22.5 13.9 L26.3 9.9 L32.8 15.0 L36.0 9.6" fill="none" stroke="#2f9bf2" stroke-width="1.3" stroke-linejoin="round"/></svg>
<div class="num" style="left:700px;width:47px;top:595px">2</div>
<div class="num" style="left:760px;width:43px;top:595px">64</div>
<div class="dot" style="left:811px;top:599px;background:#ff8c43"></div>
<div class="num" style="left:850px;top:595px;text-align:left">36</div>
<div class="dot" style="left:875px;top:599px;background:#ffc23a"></div>
<div class="num" style="left:900px;width:56px;top:595px">0.00</div>
<div class="num" style="left:960px;width:52px;top:595px">0.00</div>
<svg class="a" style="left:1029px;top:598px" width="16" height="14" viewBox="0 0 16 14"><path d="M6 12.2H2.2A1.2 1.2 0 0 1 1 11V2.2A1.2 1.2 0 0 1 2.2 1h11.6A1.2 1.2 0 0 1 15 2.2V6" fill="none" stroke="#a6a9b3" stroke-width="1.8"/><path d="M1 3h14" stroke="#a6a9b3" stroke-width="2.4"/><circle cx="10.5" cy="9.5" r="2.2" fill="none" stroke="#a6a9b3" stroke-width="1.6"/><path d="M12.2 11.2L14 13" stroke="#a6a9b3" stroke-width="1.6"/></svg>
<div class="a" style="left:1053px;top:596px;width:1px;height:19px;background:#c4c7cf"></div>
<div class="num" style="left:1062px;top:595px;color:#6c6e79">8</div>
<div class="a" style="left:1062px;top:615px;width:8px;height:0;border-top:1px dashed #6c6e79"></div>
<div class="num" style="left:1070px;width:85px;top:595px;letter-spacing:0.2px">2 weeks</div>
<svg class="a" style="left:1161px;top:598px" width="14" height="14" viewBox="0 0 14 14"><path d="M10.9 3.2A5.6 5.6 0 1 0 11.6 10.4" fill="none" stroke="#006dca" stroke-width="2" stroke-linecap="round"/><path d="M13.6 0.6V6H8.2Z" fill="#006dca" stroke="#006dca" stroke-width="0.8" stroke-linejoin="round"/></svg>
<div class="a" style="left:233px;top:690px;width:955px;height:1px;background:#e0e1e9"></div>
<div class="cb" style="left:253px;top:641px"></div>
<svg class="a" style="left:285px;top:641px" width="16" height="16" viewBox="0 0 16 16"><circle cx="8" cy="8" r="7" fill="none" stroke="#a6a9b3" stroke-width="1.6"/><path d="M8 4.5v7M4.5 8h7" stroke="#a6a9b3" stroke-width="1.6"/></svg>
<div class="kw" style="top:639px;letter-spacing:0.4px">how to keep bees off<br>hummingbird feeder</div>
<svg class="a" style="left:443px;top:664px" width="14" height="12" viewBox="0 0 14 12"><rect x="1" y="1" width="12" height="10" rx="1" fill="none" stroke="#a6a9b3" stroke-width="1.6"/><path d="M1 4.5h12" stroke="#a6a9b3" stroke-width="1.6"/><path d="M10.5 1v3.5" stroke="#a6a9b3" stroke-width="1.2"/></svg>
<div class="ib" style="left:491px;top:641px;background:#c7e6fc;color:#0a6ac9">I</div>
<div class="num" style="left:548px;width:61px;top:639px;letter-spacing:0.2px">1,300</div>
<svg class="a" style="left:629px;top:638px" width="36" height="18" viewBox="0 0 36 18"><path d="M0.0 15.4 L6.2 15.1 L9.5 13.8 L12.9 0.8 L16.0 10.6 L21.4 17.1 L36.0 16.9 L36 18 L0 18Z" fill="#d6ebfc"/><path d="M0.0 15.4 L6.2 15.1 L9.5 13.8 L12.9 0.8 L16.0 10.6 L21.4 17.1 L36.0 16.9" fill="none" stroke="#2f9bf2" stroke-width="1.3" stroke-linejoin="round"/></svg>
<div class="num" style="left:700px;width:47px;top:639px">2</div>
<div class="num" style="left:760px;width:43px;top:639px">73</div>
<div class="dot" style="left:811px;top:643px;background:#ff4953"></div>
<div class="num" style="left:850px;top:639px;text-align:left">20</div>
<div class="dot" style="left:875px;top:643px;background:#3ed9a3"></div>
<div class="num" style="left:900px;width:56px;top:639px">0.15</div>
<div class="num" style="left:960px;width:52px;top:639px">0.86</div>
<svg class="a" style="left:1029px;top:642px" width="16" height="14" viewBox="0 0 16 14"><path d="M6 12.2H2.2A1.2 1.2 0 0 1 1 11V2.2A1.2 1.2 0 0 1 2.2 1h11.6A1.2 1.2 0 0 1 15 2.2V6" fill="none" stroke="#a6a9b3" stroke-width="1.8"/><path d="M1 3h14" stroke="#a6a9b3" stroke-width="2.4"/><circle cx="10.5" cy="9.5" r="2.2" fill="none" stroke="#a6a9b3" stroke-width="1.6"/><path d="M12.2 11.2L14 13" stroke="#a6a9b3" stroke-width="1.6"/></svg>
<div class="a" style="left:1053px;top:640px;width:1px;height:19px;background:#c4c7cf"></div>
<div class="num" style="left:1062px;top:639px;color:#6c6e79">7</div>
<div class="a" style="left:1062px;top:659px;width:8px;height:0;border-top:1px dashed #6c6e79"></div>
<div class="num" style="left:1070px;width:85px;top:639px;letter-spacing:0.2px">2 weeks</div>
<svg class="a" style="left:1161px;top:642px" width="14" height="14" viewBox="0 0 14 14"><path d="M10.9 3.2A5.6 5.6 0 1 0 11.6 10.4" fill="none" stroke="#006dca" stroke-width="2" stroke-linecap="round"/><path d="M13.6 0.6V6H8.2Z" fill="#006dca" stroke="#006dca" stroke-width="0.8" stroke-linejoin="round"/></svg>
<div class="a" style="left:678px;top:270px;width:167px;height:440px;border:5px solid #c084fc;border-bottom:none"></div>
</body></html>
